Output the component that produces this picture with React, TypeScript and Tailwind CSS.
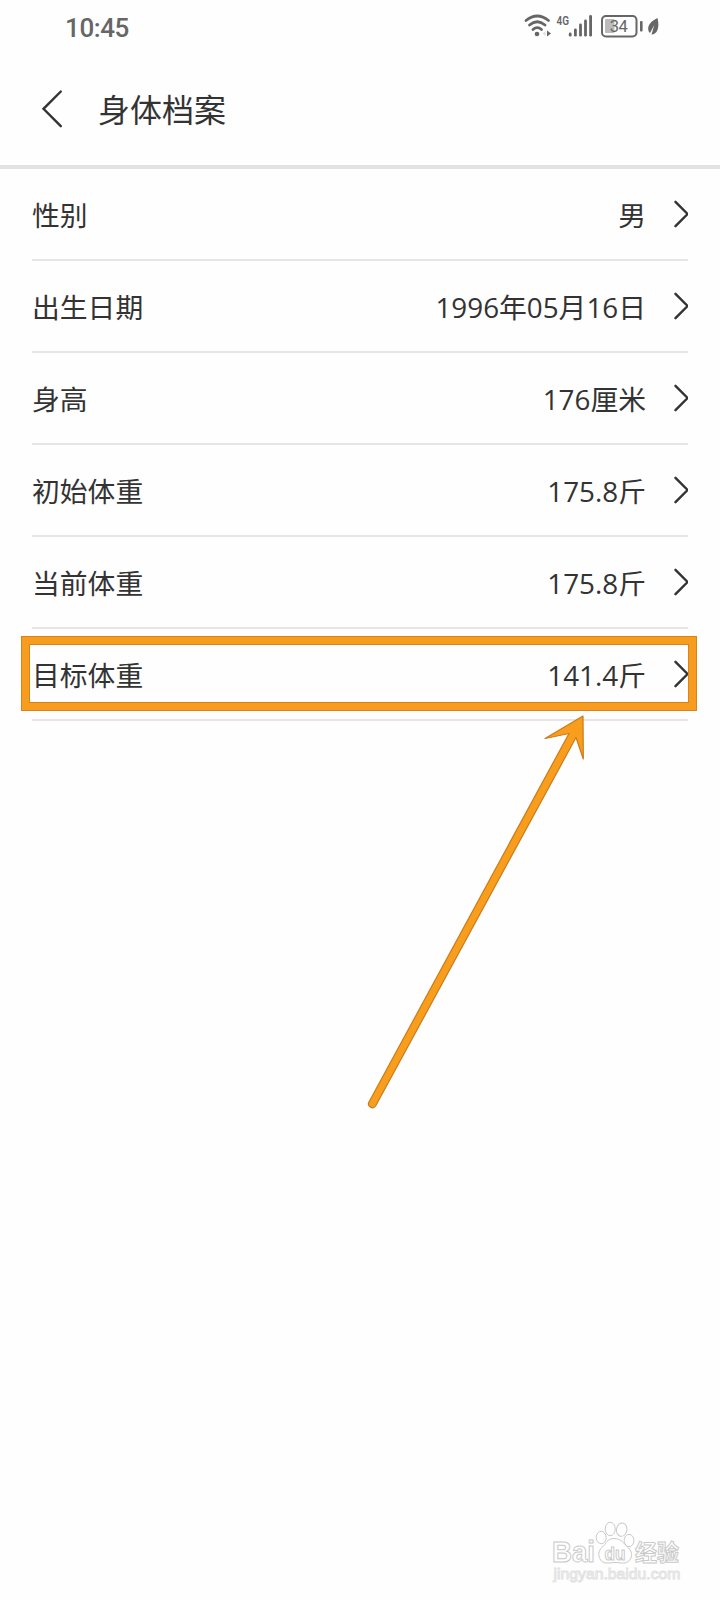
const rows = [
  { label: '性别', value: '男' },
  { label: '出生日期', value: '1996年05月16日' },
  { label: '身高', value: '176厘米' },
  { label: '初始体重', value: '175.8斤' },
  { label: '当前体重', value: '175.8斤' },
  { label: '目标体重', value: '141.4斤' },
];

function StatusBar() {
  return (
    <div className="flex h-[54px] items-center pl-[65px] pr-[60px] text-[#666]">
      <span className="pt-px font-['Roboto',sans-serif] text-[26px] font-medium leading-none tracking-[-0.4px]">10:45</span>
      <svg className="ml-auto h-[54px] w-[138px]" viewBox="522 0 138 54" fill="none">
        {/* wifi */}
        <g stroke="#666" strokeWidth="2.8" strokeLinecap="round">
          <path d="M526 20.5 Q537.2 11.5 548.5 20.5" />
          <path d="M529.5 25 Q537.2 18.5 545 25" />
          <path d="M533 29.5 Q537.2 25.7 541.5 29.5" />
        </g>
        <circle cx="537" cy="34" r="2.3" fill="#666" />
        <path d="M547 30.5 V36.5 L551 33.5 Z" fill="#666" />
        <path d="M545.5 31 V36 L542.5 33.5 Z" fill="#ddd" />
        <text x="556.5" y="24.8" fontSize="13.5" fontWeight="600" fill="#666" textLength="12.5" lengthAdjust="spacingAndGlyphs" className="font-['Roboto',sans-serif]">4G</text>
        {/* signal */}
        <g stroke="#666" strokeWidth="2.8" strokeLinecap="round">
          <path d="M570.2 34 V35.2" />
          <path d="M575.4 30 V35.2" />
          <path d="M580.5 25 V35.2" />
          <path d="M585.5 21 V35.2" />
          <path d="M590.6 16.3 V35.2" />
        </g>
        {/* battery */}
        <rect x="602" y="16" width="34.5" height="20.4" rx="4" stroke="#666" strokeWidth="2" />
        <rect x="605" y="19" width="9.5" height="14" rx="1" fill="#bbb" />
        <text x="609.8" y="32.3" fontSize="16.5" fill="#666" textLength="18" className="font-['Roboto',sans-serif]">34</text>
        <rect x="640" y="21" width="2.6" height="10.5" rx="1" fill="#666" />
        <path d="M657.5 18 C651 21 648 25 648.2 29 C648.3 31 649 32 650 33 L654.3 25 L651.5 34.5 C657 34.5 660 28 657.5 18 Z" fill="#666" />
      </svg>
    </div>
  );
}

function Watermark() {
  return (
    <svg
      className="absolute left-[548px] top-[1516px] h-[72px] w-[140px] font-['Liberation_Sans','Noto_Sans_CJK_SC',sans-serif]"
      viewBox="548 1516 140 72"
      fill="#fff"
      stroke="#c9c9c9"
      strokeWidth="1"
    >
      <text x="552" y="1562" fontSize="29" fontWeight="700" textLength="43" lengthAdjust="spacingAndGlyphs">Bai</text>
      <ellipse cx="601.2" cy="1537.5" rx="5" ry="6.2" />
      <ellipse cx="610.2" cy="1529" rx="5" ry="6.7" />
      <ellipse cx="621.7" cy="1529.7" rx="5.2" ry="6.7" transform="rotate(10 621.7 1529.7)" />
      <ellipse cx="629" cy="1540.5" rx="4.9" ry="6.2" />
      <path d="M614 1538.5 C607 1538.5 606 1544 602.5 1547 C598 1551 598 1555 600 1559 C603 1565 610 1562.5 615 1562.5 C620 1562.5 627 1565 630.5 1559 C633 1554 631 1550 627 1546.5 C623 1543 621 1538.5 614 1538.5 Z" />
      <text x="604.5" y="1559.5" fontSize="19" fontWeight="700" textLength="21" lengthAdjust="spacingAndGlyphs">du</text>
      <text x="635" y="1561" fontSize="23" fontWeight="700" textLength="44" lengthAdjust="spacingAndGlyphs">经验</text>
      <text x="553.5" y="1579" fontSize="15" textLength="127" lengthAdjust="spacingAndGlyphs" stroke="#e2e2e2">jingyan.baidu.com</text>
    </svg>
  );
}

export default function App() {
  return (
    <div className="relative h-[1600px] w-[720px] overflow-hidden bg-[#fefefe] font-['Open_Sans','Noto_Sans_CJK_SC',sans-serif] text-[#333]">
      <StatusBar />
      <header className="flex h-[115px] items-center border-b-4 border-[#e3e3e3] pb-[2px] pl-[40px]">
        <svg className="h-10 w-6" viewBox="0 0 24 40" fill="none" stroke="#333" strokeWidth="2.4" strokeLinecap="round">
          <path d="M20.8 2.5 L3.5 19.8 L20.8 37.2" />
        </svg>
        <h1 className="ml-[34px] pb-px font-['Noto_Sans_CJK_SC',sans-serif] text-[32px] leading-none">身体档案</h1>
      </header>
      <ul className="px-8">
        {rows.map((row) => (
          <li key={row.label} className="flex h-[92px] items-center border-b-2 border-[#e5e5e5] text-[27.8px] leading-none">
            <span className="pt-[3px]">{row.label}</span>
            <span className="ml-auto pt-[3px]">{row.value}</span>
            <svg className="ml-[27px] h-7 w-[15px]" viewBox="0 0 15 28" fill="none" stroke="#333" strokeWidth="2.4" strokeLinecap="round">
              <path d="M2.5 1.8 L14.6 14 L2.5 26.2" />
            </svg>
          </li>
        ))}
      </ul>

      {/* highlight and pointer over the target weight row */}
      <div className="absolute left-[21px] top-[636px] h-[75px] w-[676px] border-8 border-[#f79c1e] outline outline-1 -outline-offset-1 outline-[#d5851c] shadow-[inset_0_0_0_1px_#d5851c]" />
      <svg className="absolute left-[360px] top-[708px] h-[410px] w-[240px]" viewBox="360 708 240 410">
        <path
          d="M583 716 L545 738.5 L569 733.5 L368.7 1102.5 A3.9 3.9 0 0 0 375.6 1106 L576 737.5 L583.3 759 Z"
          fill="#f99d1c"
          stroke="#c97c1c"
          strokeWidth="1.2"
          strokeLinejoin="round"
        />
      </svg>
      <Watermark />
    </div>
  );
}
